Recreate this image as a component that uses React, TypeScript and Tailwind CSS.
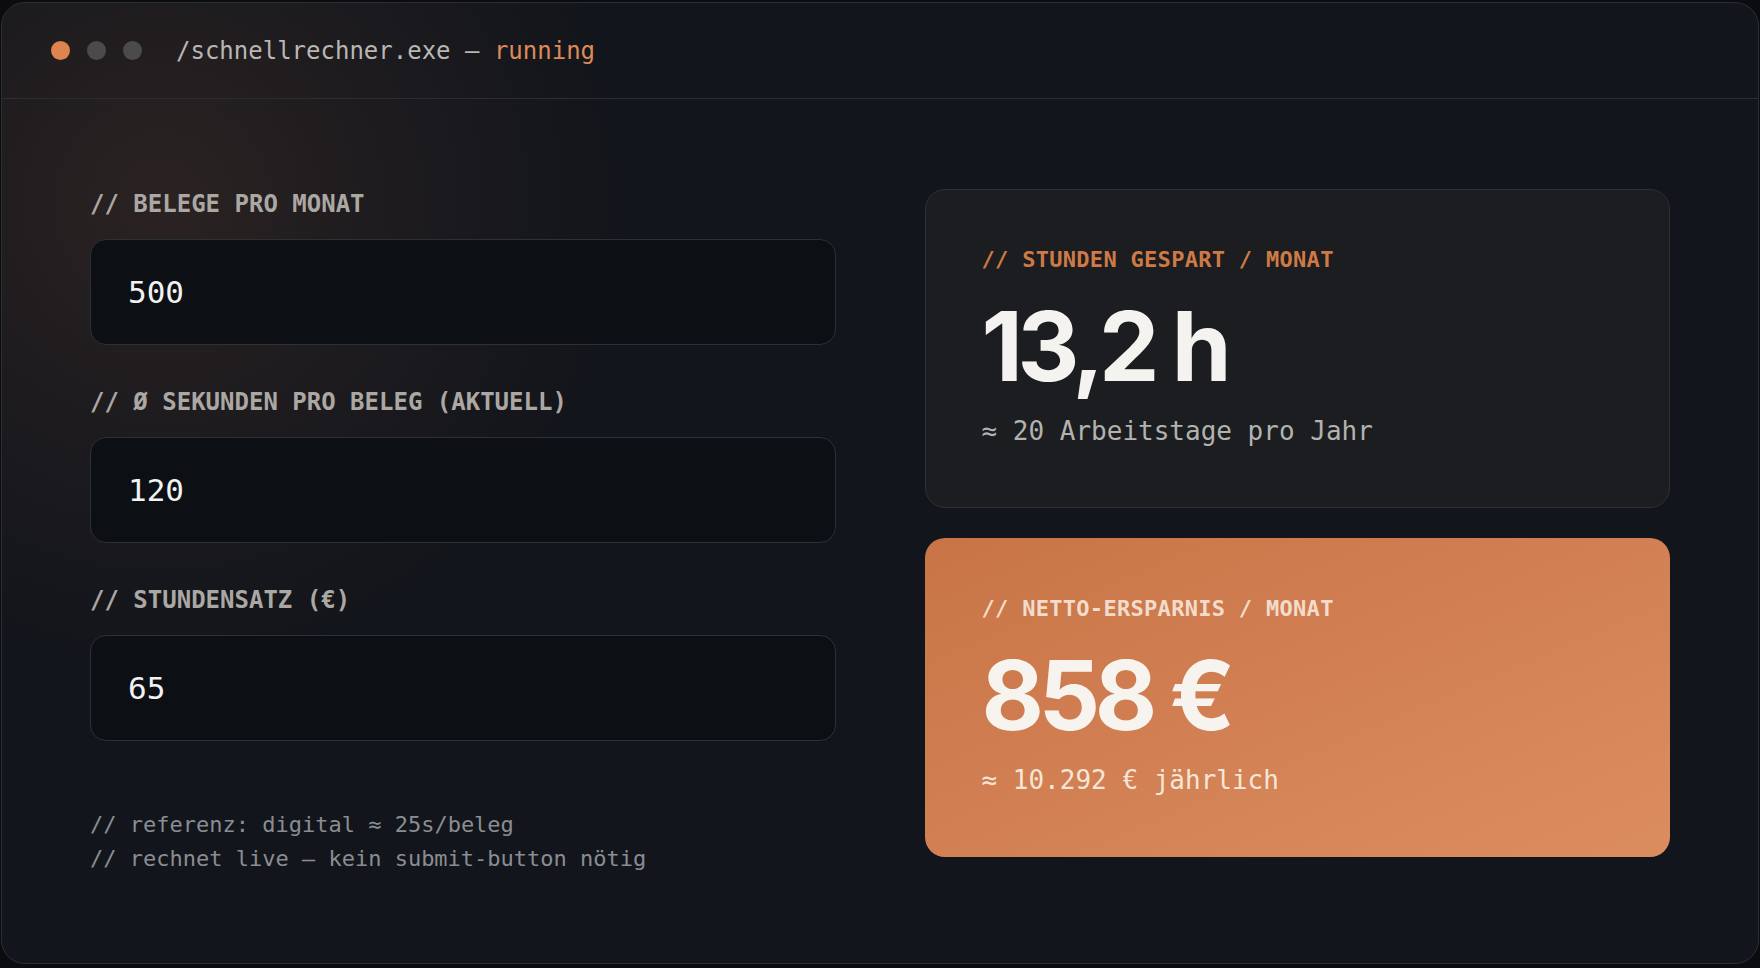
import { useState } from "react";

const MONO = "font-['DejaVu_Sans_Mono','Liberation_Mono',monospace]";
const DISPLAY = "font-['Inter','Noto_Sans',sans-serif]";

// Digitaler Referenzwert: Sekunden pro Beleg
const DIGITAL_SECONDS = 25;

function formatThousands(n: number) {
  return Math.round(n)
    .toString()
    .replace(/\B(?=(\d{3})+(?!\d))/g, ".");
}

interface FieldProps {
  label: string;
  value: string;
  onChange: (v: string) => void;
}

function Field({ label, value, onChange }: FieldProps) {
  return (
    <div className="flex flex-col gap-[20px]">
      <label className={`${MONO} text-[24px] leading-[30px] font-bold text-[#aba7a3]`}>{label}</label>
      <input
        value={value}
        onChange={(e) => onChange(e.target.value.replace(/[^0-9]/g, ""))}
        inputMode="numeric"
        className={`${MONO} w-full h-[106px] pl-[37px] pr-6 text-[31px] text-[#f2f2f2] bg-[#0c0f13] border border-[#2d3035] rounded-2xl outline-none`}
      />
    </div>
  );
}

export default function App() {
  const [belege, setBelege] = useState("500");
  const [seconds, setSeconds] = useState("120");
  const [rate, setRate] = useState("65");

  const b = Number(belege) || 0;
  const s = Number(seconds) || 0;
  const r = Number(rate) || 0;

  const hours = Math.max(0, (b * (s - DIGITAL_SECONDS)) / 3600);
  const savings = hours * r;
  const workdays = Math.round((hours * 12) / 8);

  return (
    <div className="min-h-screen w-full bg-[#0b0c0f] px-[1px] pt-[2px] pb-[3px]">
      <div className="relative overflow-hidden rounded-[24px] border border-[#2b2e33] bg-[#12151b]">
        {/* warm glow top-left */}
        <div className="pointer-events-none absolute inset-0 bg-[radial-gradient(circle_at_160px_200px,rgba(165,100,70,0.17),rgba(165,100,70,0.07)_250px,transparent_470px)]" />

        {/* Title bar */}
        <div className="relative flex h-[96px] items-center border-b border-[#2a2d31] pl-[49px]">
          <div className="flex items-center gap-[17px]">
            <span className="h-[19px] w-[19px] rounded-full bg-[#df844f]" />
            <span className="h-[19px] w-[19px] rounded-full bg-[#4b4b4d]" />
            <span className="h-[19px] w-[19px] rounded-full bg-[#4b4b4d]" />
          </div>
          <div className={`${MONO} ml-[34px] text-[24px] text-[#b9b7b4]`}>
            /schnellrechner.exe – <span className="text-[#de8a58]">running</span>
          </div>
        </div>

        {/* Body */}
        <div className="relative grid grid-cols-2 items-start gap-[89px] px-[88px] pt-[90px] pb-[87px]">
          {/* Inputs */}
          <div className="flex flex-col">
            <div className="flex flex-col gap-[42px]">
              <Field label="// BELEGE PRO MONAT" value={belege} onChange={setBelege} />
              <Field label="// Ø SEKUNDEN PRO BELEG (AKTUELL)" value={seconds} onChange={setSeconds} />
              <Field label="// STUNDENSATZ (€)" value={rate} onChange={setRate} />
            </div>
            <div className={`${MONO} mt-[67px] text-[22px] leading-[34px] text-[#8a8d91]`}>
              <p>// referenz: digital ≈ {DIGITAL_SECONDS}s/beleg</p>
              <p>// rechnet live – kein submit-button nötig</p>
            </div>
          </div>

          {/* Results */}
          <div className="flex flex-col gap-[30px]">
            <div className="rounded-[20px] border border-[#2e3135] bg-[#1b1d20] px-[56px] pt-[56px] pb-[58px]">
              <div className={`${MONO} text-[22px] leading-[28px] font-bold tracking-[0.3px] text-[#cf7a46]`}>
                // STUNDEN GESPART / MONAT
              </div>
              <div className={`${DISPLAY} mt-[24px] text-[96px] leading-none font-bold tracking-[-0.055em] text-[#f4f3ef]`}>
                {hours.toFixed(1).replace(".", ",")} h
              </div>
              <div className={`${MONO} mt-[19px] text-[26px] leading-[36px] text-[#b3b2af]`}>
                ≈ {workdays} Arbeitstage pro Jahr
              </div>
            </div>

            <div className="rounded-[20px] bg-gradient-to-br from-[#c87447] to-[#dc8d60] px-[57px] pt-[57px] pb-[59px]">
              <div className={`${MONO} text-[22px] leading-[28px] font-bold tracking-[0.3px] text-[#f3dccb]`}>
                // NETTO-ERSPARNIS / MONAT
              </div>
              <div className={`${DISPLAY} mt-[24px] text-[96px] leading-none font-bold tracking-[-0.055em] text-[#f7f3ee]`}>
                {formatThousands(savings)} €
              </div>
              <div className={`${MONO} mt-[19px] text-[26px] leading-[36px] text-[#f6e6d9]`}>
                ≈ {formatThousands(savings * 12)} € jährlich
              </div>
            </div>
          </div>
        </div>
      </div>
    </div>
  );
}
